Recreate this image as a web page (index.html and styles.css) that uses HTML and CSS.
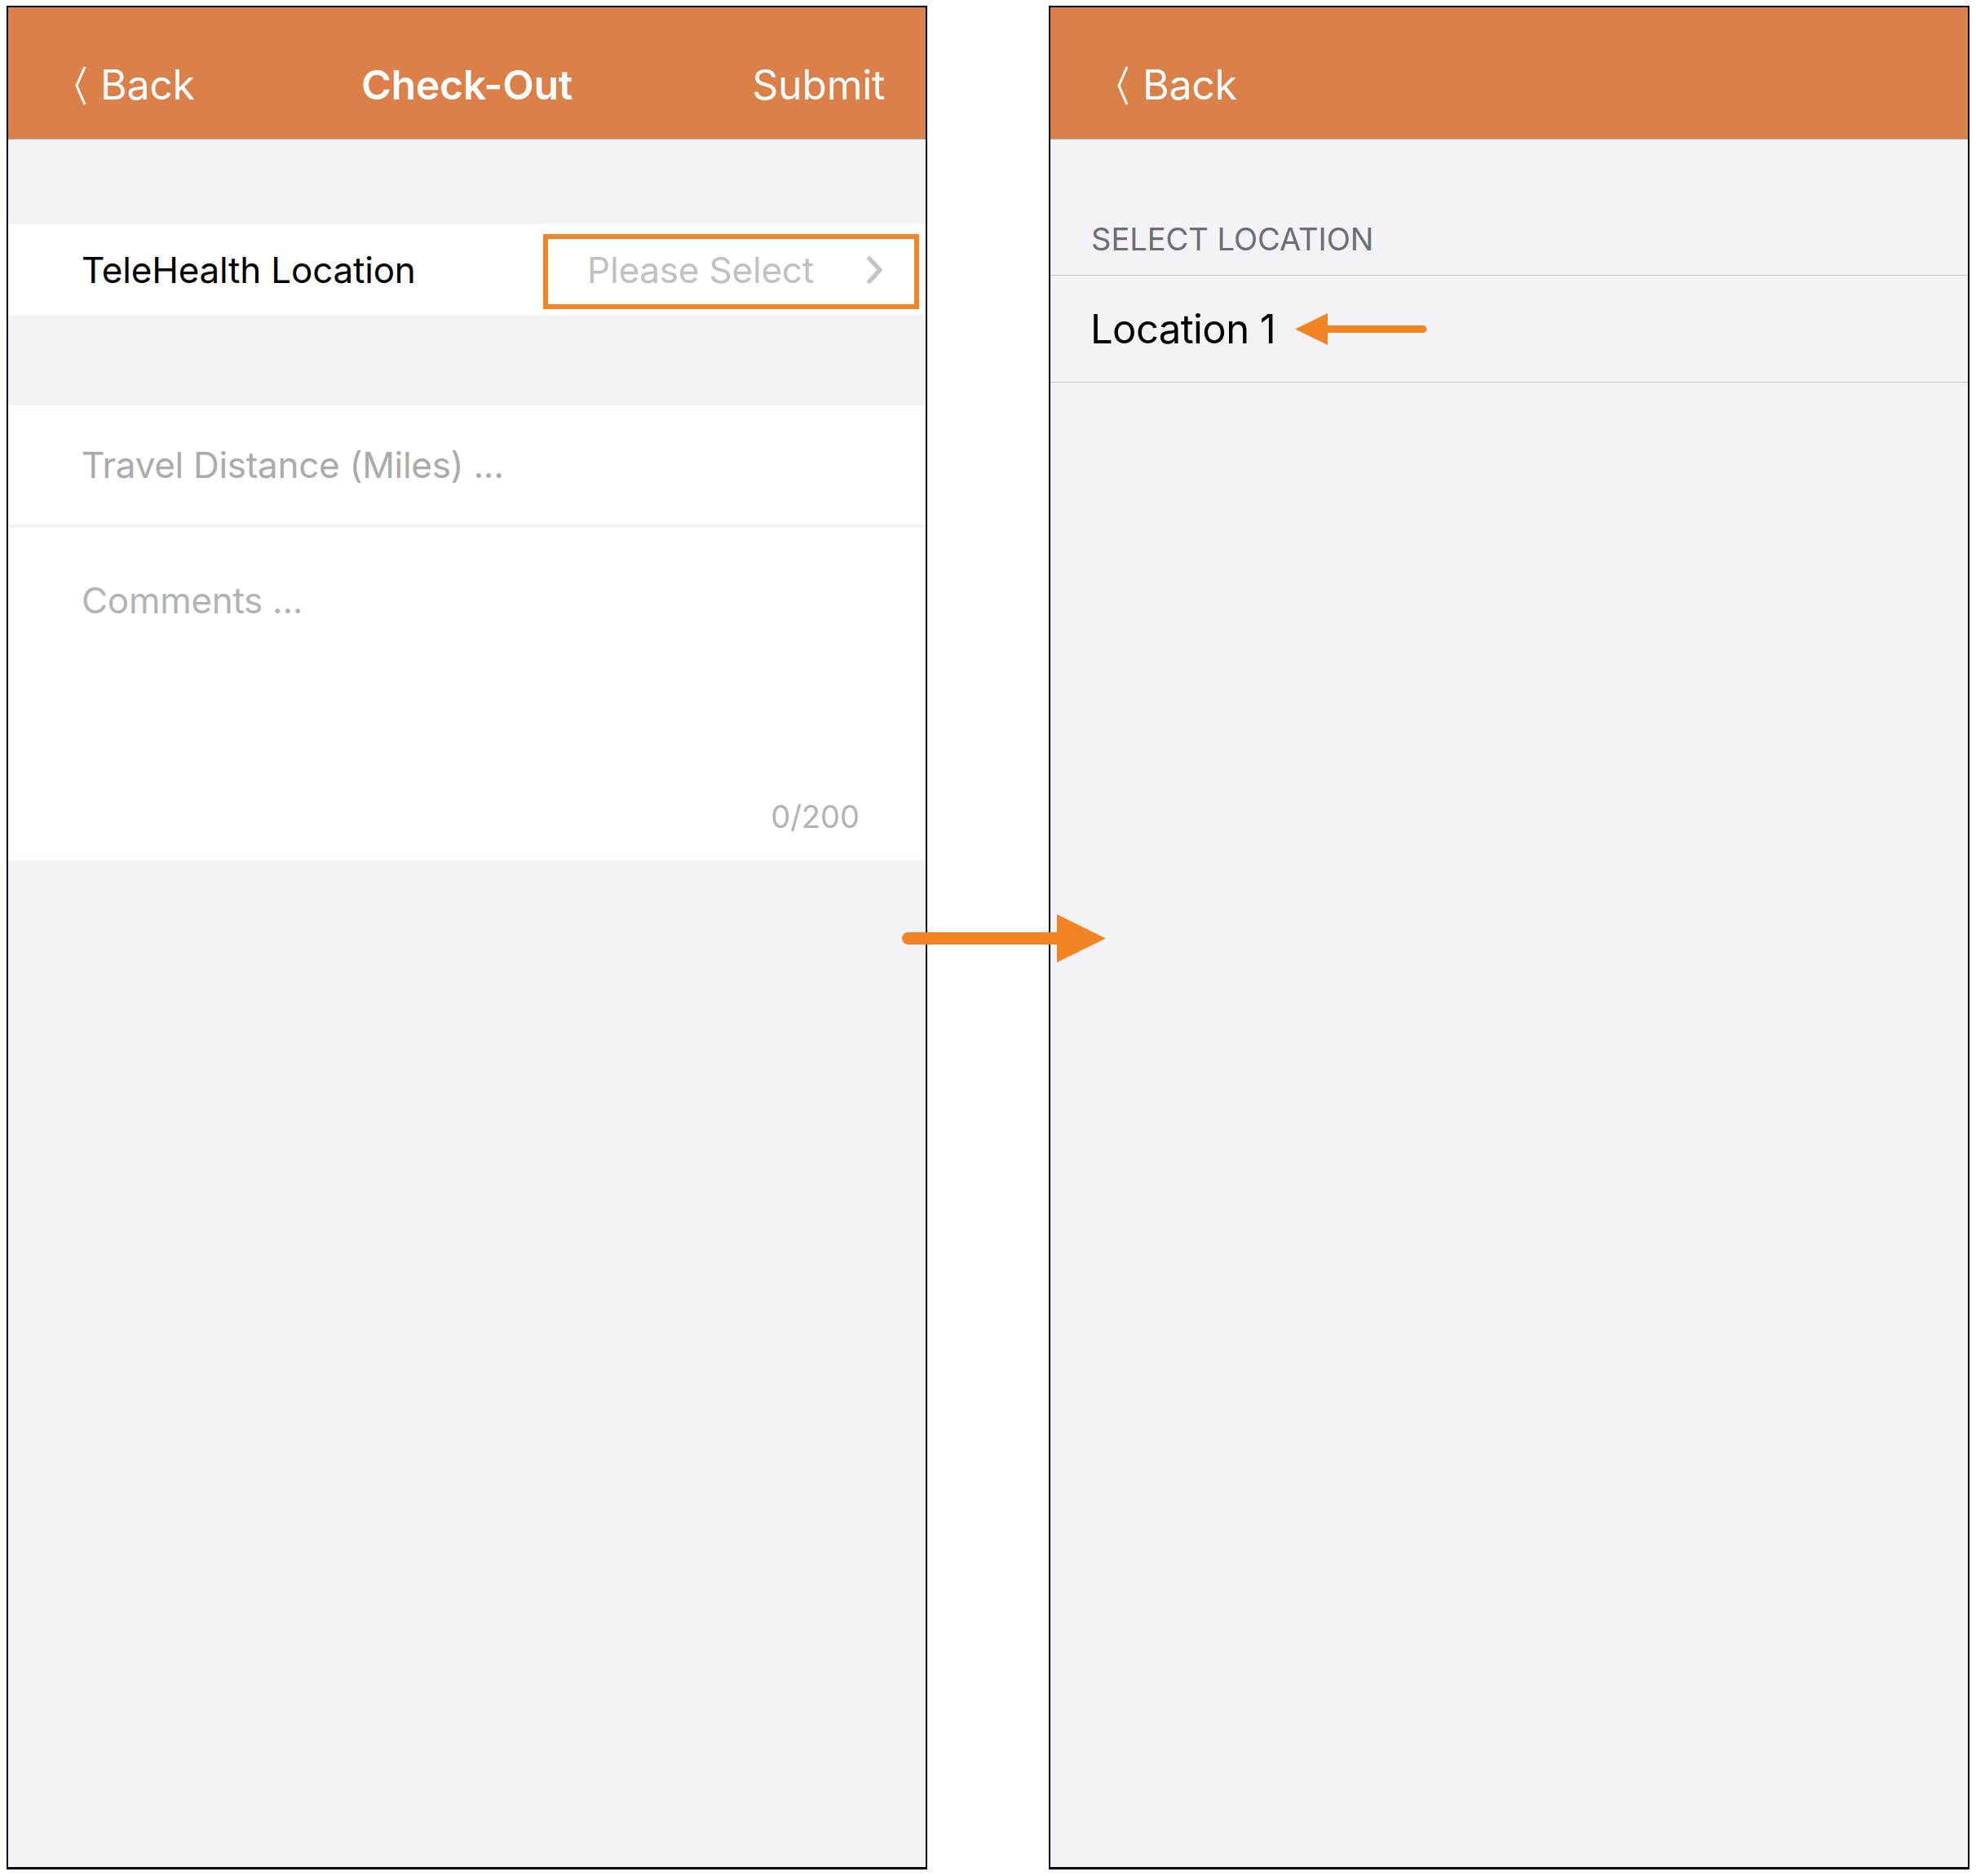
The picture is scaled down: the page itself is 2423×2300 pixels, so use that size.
FILE: index.html
```html
<!DOCTYPE html>
<html lang="en">
<head>
<meta charset="utf-8">
<title>Check-Out</title>
<link rel="stylesheet" href="styles.css">
</head>
<body>
<div class="stage">
  <section class="phone">
    <header class="nav">
      <div class="nav-left">
        <svg class="back-chev" viewBox="0 0 14 48" width="14" height="48"><polyline points="12,1 2,24 12,47" fill="none" stroke="#fff" stroke-width="3"/></svg>
        <span>Back</span>
      </div>
      <div class="nav-title">Check-Out</div>
      <div class="nav-right">Submit</div>
    </header>
    <div class="gap-top"></div>
    <div class="row pick">
      <span class="label">TeleHealth Location</span>
      <span class="value">
        <span class="placeholder">Please Select</span>
        <svg class="disclosure" viewBox="0 0 22 36" width="22" height="36"><polyline points="4,4 17,18 4,32" fill="none" stroke="#c4c4c6" stroke-width="5.5" stroke-linecap="round" stroke-linejoin="round"/></svg>
      </span>
    </div>
    <div class="gap-mid"></div>
    <div class="field travel">Travel Distance (Miles) ...</div>
    <div class="field-sep"></div>
    <div class="field comments">
      <div class="comments-ph">Comments ...</div>
      <div class="count">0/200</div>
    </div>
  </section>

  <section class="phone">
    <header class="nav">
      <div class="nav-left">
        <svg class="back-chev" viewBox="0 0 14 48" width="14" height="48"><polyline points="12,1 2,24 12,47" fill="none" stroke="#fff" stroke-width="3"/></svg>
        <span>Back</span>
      </div>
      <div class="nav-title"></div>
      <div class="nav-right"></div>
    </header>
    <div class="section-head">SELECT LOCATION</div>
    <div class="list">
      <div class="list-row">Location 1</div>
    </div>
  </section>

  <svg class="flow-arrow" viewBox="1100 1115 260 70" width="260" height="70">
    <line x1="1113.5" y1="1150.5" x2="1300" y2="1150.5" stroke="#f38423" stroke-width="15" stroke-linecap="round"/>
    <polygon points="1296,1121 1356,1150.5 1296,1180" fill="#f38423"/>
  </svg>
  <svg class="pick-arrow" viewBox="1580 378 180 52" width="180" height="52">
    <line x1="1620" y1="403.5" x2="1745" y2="403.5" stroke="#f38423" stroke-width="9" stroke-linecap="round"/>
    <polygon points="1588,403.5 1628,384 1628,423" fill="#f38423"/>
  </svg>
</div>
</body>
</html>
```

FILE: styles.css
```css
*, *::before, *::after { box-sizing: border-box; }

html, body {
  margin: 0;
  padding: 0;
  background: #ffffff;
}

body {
  font-family: "Inter", "Roboto", "Liberation Sans", sans-serif;
  color: #000;
}

.stage {
  position: relative;
  display: flex;
  gap: 149px;
  padding: 7px 0 0 8px;
  width: 2423px;
  height: 2300px;
}

.phone {
  width: 1129px;
  height: 2285px;
  border: 2px solid #000;
  border-bottom-width: 3px;
  background: #f2f2f7;
  display: flex;
  flex-direction: column;
  overflow: hidden;
}

/* navigation bar */
.nav {
  flex: none;
  height: 162px;
  padding-top: 28px;
  background: #dc8049;
  border-bottom: 1px solid #a9a9a9;
  display: grid;
  grid-template-columns: 1fr auto 1fr;
  align-items: center;
  color: #fff;
  font-size: 50px;
  letter-spacing: -0.3px;
}

.nav-left {
  display: flex;
  align-items: center;
  padding-left: 82px;
  gap: 17px;
}

.back-chev {
  display: block;
  margin-top: 2px;
}

.nav-title {
  font-weight: 600;
  justify-self: center;
}

.nav-right {
  justify-self: end;
  padding-right: 50px;
}

/* left screen */
.gap-top { flex: none; height: 104px; }
.gap-mid { flex: none; height: 111px; }

.row {
  flex: none;
  position: relative;
  height: 111px;
  background: #fff;
  display: flex;
  align-items: center;
  justify-content: space-between;
  padding: 0 51px 0 90px;
}

.label {
  font-size: 44px;
  letter-spacing: -0.2px;
}

.value {
  display: flex;
  align-items: center;
  gap: 64px;
}

.placeholder {
  font-size: 44px;
  letter-spacing: -0.2px;
  color: #c1c1c3;
}

.disclosure {
  display: block;
}

/* highlight annotation around the value cell */
.pick::after {
  content: "";
  position: absolute;
  left: 656px;
  top: 12px;
  width: 461px;
  height: 92px;
  border: 6px solid #f38423;
}

.field {
  flex: none;
  background: #fff;
  padding-left: 90px;
  font-size: 44px;
  letter-spacing: -0.3px;
  color: #ababab;
}

.travel {
  height: 146px;
  display: flex;
  align-items: center;
}

.field-sep {
  flex: none;
  height: 4px;
  background: #f2f2f7;
}

.comments {
  height: 408px;
  padding-top: 62px;
  padding-right: 81px;
  padding-bottom: 31px;
  display: flex;
  flex-direction: column;
  justify-content: space-between;
  color: #b3b3b3;
}

.count {
  align-self: flex-end;
  font-size: 38px;
  letter-spacing: 0;
  color: #b3b3b3;
}

/* right screen */
.section-head {
  flex: none;
  height: 167px;
  padding: 0 0 21px 50px;
  display: flex;
  align-items: flex-end;
  font-size: 38px;
  color: #6d6d72;
  border-bottom: 1px solid #c6c6c8;
}

.list-row {
  height: 131px;
  padding-left: 49px;
  display: flex;
  align-items: center;
  font-size: 49px;
  letter-spacing: -0.6px;
  border-bottom: 1px solid #c6c6c8;
}

/* annotation arrows */
.flow-arrow {
  position: absolute;
  left: 1100px;
  top: 1115px;
}

.pick-arrow {
  position: absolute;
  left: 1580px;
  top: 378px;
}
```
